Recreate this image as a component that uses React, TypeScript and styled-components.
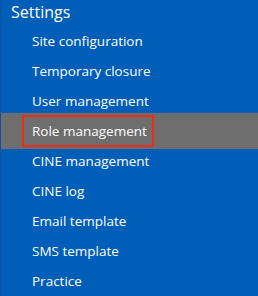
import React from "react";
import styled, { createGlobalStyle } from "styled-components";

const Global = createGlobalStyle`
  html, body { margin: 0; padding: 0; background: #005eb8; }
  body { font-family: "Open Sans", "Noto Sans", sans-serif; }
`;

const Panel = styled.nav`
  width: 258px;
  height: 296px;
  background: #005eb8;
  border-left: 1px solid #0a52a0;
  box-sizing: border-box;
  color: #ffffff;
  display: flex;
  flex-direction: column;
  overflow: hidden;
`;

const Title = styled.div`
  font-size: 16px;
  line-height: 24px;
  padding: 0 0 0 10px;
  height: 26px;
`;

const List = styled.ul`
  list-style: none;
  margin: 0;
  padding: 0;
  display: flex;
  flex-direction: column;
`;

const Item = styled.li<{ $active?: boolean }>`
  height: 30px;
  display: flex;
  align-items: center;
  padding-left: 31px;
  font-size: 13.5px;
  background: ${(p) => (p.$active ? "#6e6e6e" : "transparent")};
  ${(p) => (p.$active ? "margin: -3px 0; height: 36px;" : "")}
`;

const Label = styled.span<{ $active?: boolean }>`
  display: inline-flex;
  align-items: center;
  height: 28px;
  padding: 0 5px 0 8px;
  margin-left: -10px;
  border: 2px solid ${(p) => (p.$active ? "#f22a0c" : "transparent")};
`;

const items = [
  "Site configuration",
  "Temporary closure",
  "User management",
  "Role management",
  "CINE management",
  "CINE log",
  "Email template",
  "SMS template",
  "Practice",
];

export default function App() {
  return (
    <>
      <Global />
      <Panel>
        <Title>Settings</Title>
        <List>
          {items.map((t) => {
            const a = t === "Role management";
            return (
              <Item key={t} $active={a}>
                <Label $active={a}>{t}</Label>
              </Item>
            );
          })}
        </List>
      </Panel>
    </>
  );
}
